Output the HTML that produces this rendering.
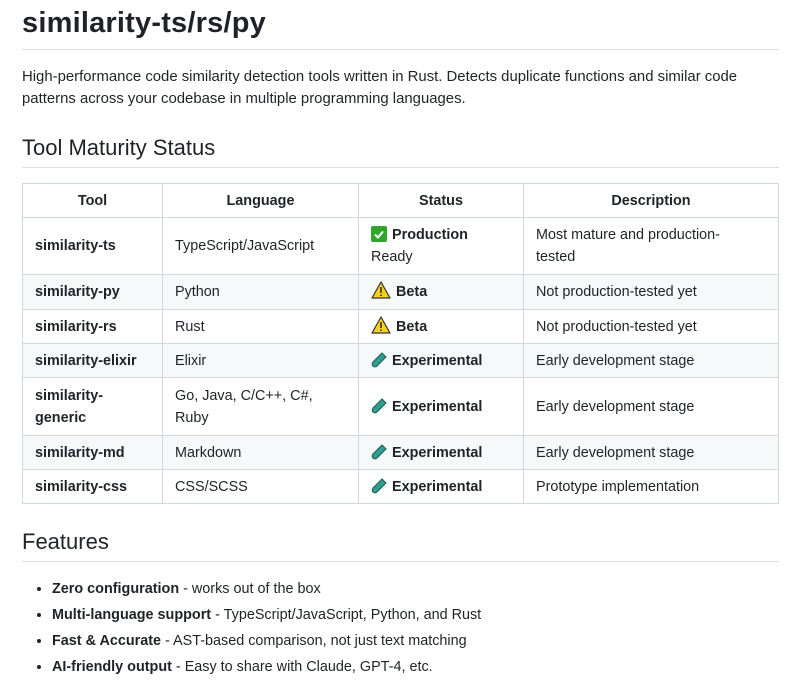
<!DOCTYPE html>
<html><head><meta charset="utf-8"><style>
body{margin:0;background:#fff;font-family:"Liberation Sans",sans-serif;color:#1f2328;}
.wrap{position:absolute;left:22px;width:757px;top:0}
h1{position:absolute;top:7px;left:0;margin:0;font-size:29px;font-weight:600;letter-spacing:0.2px}
.hr{position:absolute;left:0;width:757px;height:1px;background:#d8dee4}
p{position:absolute;top:66px;margin:0;font-size:14.9px;line-height:22px;width:757px}
h2{position:absolute;left:0;margin:0;font-size:22px;font-weight:500}
table{position:absolute;top:183px;left:0;border-collapse:collapse;font-size:14.4px;width:757px}
td,th{border:1px solid #d0d7de;padding:0 12px;line-height:22px;vertical-align:middle}
th{font-weight:600;text-align:center}
tr:nth-child(odd) td{background:#f6f8fa}
td:first-child{font-weight:600}
.st{font-weight:600}
ul{position:absolute;top:576px;margin:0;padding-left:30px;font-size:14.4px;line-height:26px}
li b{font-weight:600}
.ic{display:inline-block;vertical-align:-3px;margin-right:5px}
</style></head><body><div class="wrap">
<h1>similarity-ts/rs/py</h1>
<div class="hr" style="top:49px"></div>
<p>High-performance code similarity detection tools written in Rust. Detects duplicate functions and similar code patterns across your codebase in multiple programming languages.</p>
<h2 style="top:135px">Tool Maturity Status</h2>
<div class="hr" style="top:167px"></div>
<table>
<colgroup><col style="width:140px"><col style="width:196px"><col style="width:165px"><col></colgroup>
<tr style="height:34px"><th>Tool</th><th>Language</th><th>Status</th><th>Description</th></tr>
<tr style="height:57px"><td>similarity-ts</td><td>TypeScript/JavaScript</td><td><span class="st"><svg class="ic" width="16" height="16" viewBox="0 0 16 16"><rect width="16" height="16" rx="2" fill="#2fa52f"/><path d="M4 8.5l3 3 5-6" stroke="#fff" stroke-width="2" fill="none"/></svg>Production</span><br>Ready</td><td>Most mature and production-<br>tested</td></tr>
<tr style="height:35px"><td>similarity-py</td><td>Python</td><td><span class="st"><svg class="ic" width="20" height="18" viewBox="0 0 20 18"><path d="M10 1L19 17H1Z" fill="#f7d21c" stroke="#333" stroke-width="1.2" stroke-linejoin="round"/><path d="M10 6v6M10 13.5v1.5" stroke="#333" stroke-width="1.6"/></svg>Beta</span></td><td>Not production-tested yet</td></tr>
<tr style="height:34px"><td>similarity-rs</td><td>Rust</td><td><span class="st"><svg class="ic" width="20" height="18" viewBox="0 0 20 18"><path d="M10 1L19 17H1Z" fill="#f7d21c" stroke="#333" stroke-width="1.2" stroke-linejoin="round"/><path d="M10 6v6M10 13.5v1.5" stroke="#333" stroke-width="1.6"/></svg>Beta</span></td><td>Not production-tested yet</td></tr>
<tr style="height:34px"><td>similarity-elixir</td><td>Elixir</td><td><span class="st"><svg class="ic" width="16" height="16" viewBox="0 0 16 16"><path d="M11 1l4 4-9 9a2.8 2.8 0 0 1-4-4z" fill="#2f9e8e" stroke="#1d5b53" stroke-width="1"/></svg>Experimental</span></td><td>Early development stage</td></tr>
<tr style="height:58px"><td>similarity-<br>generic</td><td>Go, Java, C/C++, C#,<br>Ruby</td><td><span class="st"><svg class="ic" width="16" height="16" viewBox="0 0 16 16"><path d="M11 1l4 4-9 9a2.8 2.8 0 0 1-4-4z" fill="#2f9e8e" stroke="#1d5b53" stroke-width="1"/></svg>Experimental</span></td><td>Early development stage</td></tr>
<tr style="height:34px"><td>similarity-md</td><td>Markdown</td><td><span class="st"><svg class="ic" width="16" height="16" viewBox="0 0 16 16"><path d="M11 1l4 4-9 9a2.8 2.8 0 0 1-4-4z" fill="#2f9e8e" stroke="#1d5b53" stroke-width="1"/></svg>Experimental</span></td><td>Early development stage</td></tr>
<tr style="height:34px"><td>similarity-css</td><td>CSS/SCSS</td><td><span class="st"><svg class="ic" width="16" height="16" viewBox="0 0 16 16"><path d="M11 1l4 4-9 9a2.8 2.8 0 0 1-4-4z" fill="#2f9e8e" stroke="#1d5b53" stroke-width="1"/></svg>Experimental</span></td><td>Prototype implementation</td></tr>
</table>
<h2 style="top:529px">Features</h2>
<div class="hr" style="top:561px"></div>
<ul>
<li><b>Zero configuration</b> - works out of the box</li>
<li><b>Multi-language support</b> - TypeScript/JavaScript, Python, and Rust</li>
<li><b>Fast &amp; Accurate</b> - AST-based comparison, not just text matching</li>
<li><b>AI-friendly output</b> - Easy to share with Claude, GPT-4, etc.</li>
</ul>
</div></body></html>
